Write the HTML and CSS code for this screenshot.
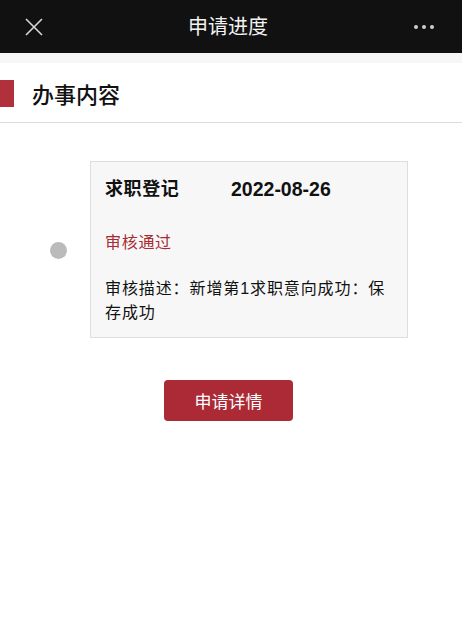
FILE: index.html
```html
<!DOCTYPE html>
<html lang="zh">
<head>
<meta charset="utf-8">
<link rel="stylesheet" href="styles.css">
</head>
<body>
<div class="topbar">
  <svg class="close" width="18" height="18" viewBox="0 0 18 18"><path d="M1 1L17 17M17 1L1 17" stroke="#d8d8d8" stroke-width="1.6" fill="none"/></svg>
  <div class="title">申请进度</div>
  <div class="more"><span></span><span></span><span></span></div>
</div>
<div class="gap"></div>
<div class="section-head">
  <div class="mark"></div>
  <div class="section-title">办事内容</div>
</div>
<div class="timeline">
  <div class="dot-col"><div class="dot"></div></div>
  <div class="card">
    <div class="card-head"><span class="name">求职登记</span><span class="date">2022-08-26</span></div>
    <div class="status">审核通过</div>
    <div class="desc">审核描述：新增第1求职意向成功：保存成功</div>
  </div>
</div>
<div class="actions"><button class="btn">申请详情</button></div>
</body>
</html>
```
FILE: styles.css
```css
* { box-sizing: border-box; }
html, body { margin: 0; padding: 0; background: #fff; }
body { font-family: "Liberation Sans", "Noto Sans CJK SC", sans-serif; color: #111; width: 462px; }
.topbar { height: 53px; background: #111111; display: flex; align-items: center; position: relative; }
.close { margin-left: 25px; }
.title { position: absolute; left: 0; right: 6px; text-align: center; color: #f2f2f2; font-size: 20px; top: 13px; line-height: 28px; }
.more { margin-left: auto; margin-right: 28px; display: flex; gap: 4px; }
.more span { width: 4px; height: 4px; border-radius: 50%; background: #cfcfcf; display: block; }
.gap { height: 10px; background: #f6f6f6; }
.section-head { height: 60px; display: flex; align-items: center; border-bottom: 1px solid #dcdcdc; }
.mark { width: 14px; height: 27px; background: #b0303b; margin-top: 2px; }
.section-title { margin-left: 18px; font-size: 22px; font-weight: 500; color: #111; margin-top: 1px; }
.timeline { display: flex; margin-top: 38px; }
.dot-col { width: 90px; display: flex; align-items: center; padding-left: 50px; padding-top: 1px; }
.dot { width: 17px; height: 17px; border-radius: 50%; background: #bbbbbb; }
.card { width: 318px; background: #f7f7f7; border: 1px solid #dedede; padding: 15px 12px 12px 14px; }
.card-head { font-size: 18px; font-weight: bold; line-height: 24px; display: flex; letter-spacing: 0.6px; }
.name { width: 126px; }
.date { font-size: 19.5px; letter-spacing: 0; }
.status { color: #a82a35; font-size: 16px; letter-spacing: 0.7px; margin-top: 30px; line-height: 24px; }
.desc { font-size: 16px; letter-spacing: 0.9px; line-height: 24px; margin-top: 22px; color: #111; }
.actions { display: flex; margin-top: 42px; padding-left: 164px; }
.btn { width: 129px; height: 41px; background: #ab2a35; color: #fff; border: none; border-radius: 4px; font-size: 17px; font-family: "Liberation Sans", "Noto Sans CJK SC", sans-serif; }
```
